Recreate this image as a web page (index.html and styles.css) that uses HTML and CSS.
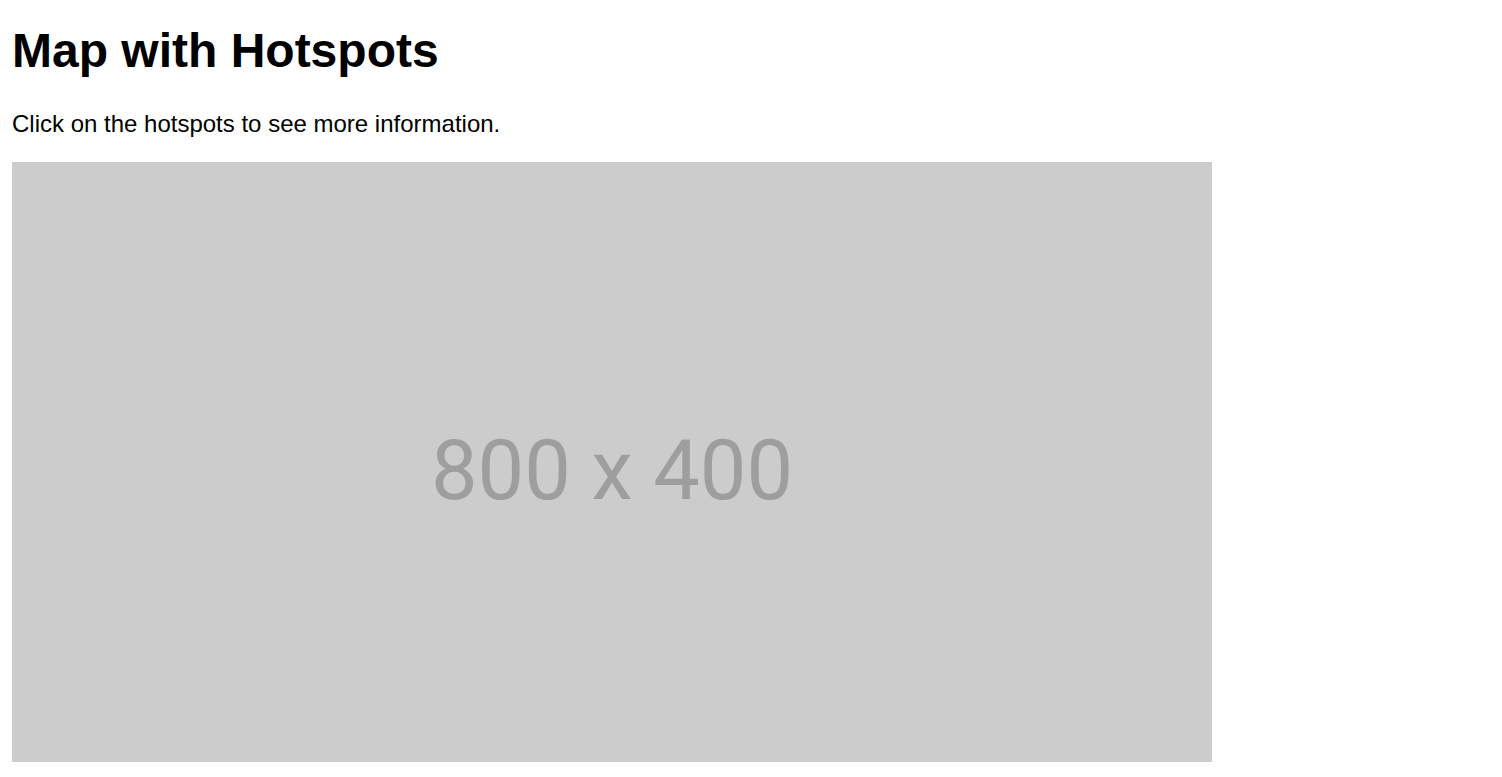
FILE: index.html
```html
<!DOCTYPE html>
<html lang="en">
<head>
<meta charset="utf-8">
<title>Map with Hotspots</title>
<link rel="stylesheet" href="styles.css">
</head>
<body>
  <h1 class="title">Map with Hotspots</h1>
  <p class="intro">Click on the hotspots to see more information.</p>
  <div class="map" role="img" aria-label="Map">
    <span class="map-label">800 x 400</span>
  </div>
</body>
</html>
```
FILE: styles.css
```css
html, body {
  background: #ffffff;
}
body {
  margin: 0;
  padding: 0 12px;
  font-family: "Liberation Sans", Arial, sans-serif;
  color: #000000;
}
.title {
  font-size: 48px;
  font-weight: bold;
  margin: 23px 0 32px;
  line-height: normal;
}
.intro {
  font-size: 24px;
  margin: 0 0 24px;
  line-height: normal;
}
.map {
  width: 1200px;
  height: 600px;
  background: #cccccc;
  display: flex;
  align-items: center;
  justify-content: center;
}
.map-label {
  font-family: Roboto, "Liberation Sans", sans-serif;
  font-size: 83px;
  color: #9e9e9e;
  line-height: 1;
  padding-top: 16px;
}
```
